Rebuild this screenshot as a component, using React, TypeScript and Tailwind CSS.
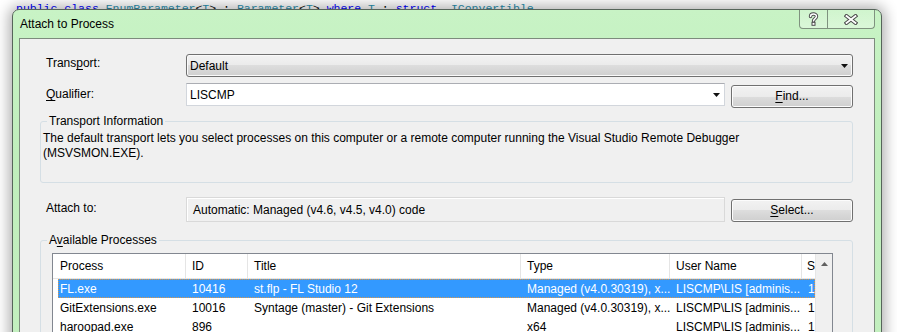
import React from "react";

// --- small glyphs ---
function DropArrow() {
  return (
    <svg width="7" height="4" viewBox="0 0 7 4" className="shrink-0">
      <path d="M0 0h7L3.5 4z" fill="#111" />
    </svg>
  );
}

function HelpGlyph() {
  return (
    <svg width="11" height="14" viewBox="0 0 11 14">
      <path d="M2.5 4.5C2.5 1.2 8.5 1.2 8.5 4.3C8.5 6.6 5.5 6.6 5.5 9" fill="none" stroke="#4b4b4b" strokeWidth="3.4" strokeLinecap="round" />
      <path d="M2.5 4.5C2.5 1.2 8.5 1.2 8.5 4.3C8.5 6.6 5.5 6.6 5.5 9" fill="none" stroke="#fff" strokeWidth="1.5" strokeLinecap="round" />
      <rect x="4" y="10.3" width="3" height="3" fill="#fff" stroke="#4b4b4b" strokeWidth="1" />
    </svg>
  );
}

function CloseGlyph() {
  return (
    <svg width="14" height="11" viewBox="0 0 14 11">
      <path d="M2.5 2L11.5 9M11.5 2L2.5 9" stroke="#4b4b4b" strokeWidth="3.8" strokeLinecap="square" />
      <path d="M2.5 2L11.5 9M11.5 2L2.5 9" stroke="#fff" strokeWidth="1.8" strokeLinecap="square" />
    </svg>
  );
}

// --- Win7 style button ---
function Button({ hot, rest }: { hot: string; rest: string }) {
  return (
    <button className="w-[122px] h-[23px] shrink-0 rounded-[3px] border border-[#707070] bg-[linear-gradient(to_bottom,#f2f2f2_0%,#ebebeb_50%,#dddddd_50%,#cfcfcf_100%)] shadow-[inset_0_0_0_1px_#fcfcfc] flex items-center justify-center leading-[15px]">
      <span className="underline underline-offset-2">{hot}</span>
      {rest}
    </button>
  );
}

const columns = [
  { name: "Process", w: "w-[133px] pl-[7px]" },
  { name: "ID", w: "w-[62px] pl-[6px]" },
  { name: "Title", w: "w-[273px] pl-[6px]" },
  { name: "Type", w: "w-[149px] pl-[6px]" },
  { name: "User Name", w: "w-[132px] pl-[6px]" },
];

const processes = [
  ["FL.exe", "10416", "st.flp - FL Studio 12", "Managed (v4.0.30319), x...", "LISCMP\\LIS [adminis...", "1"],
  ["GitExtensions.exe", "10016", "Syntage (master) - Git Extensions", "Managed (v4.0.30319), x...", "LISCMP\\LIS [adminis...", "1"],
  ["haroopad.exe", "896", "", "x64", "LISCMP\\LIS [adminis...", "1"],
];

function ProcessList() {
  return (
    <div className="h-[120px] border border-[#828790] bg-white flex">
      <div className="flex-1 min-w-0 overflow-hidden">
        {/* header */}
        <div className="h-[25px] flex border-b border-[#e5e5e5]">
          {columns.map((c) => (
            <div key={c.name} className={`${c.w} shrink-0 border-r border-[#e5e5e5] flex items-center whitespace-nowrap`}>
              {c.name}
            </div>
          ))}
          <div className="flex-1 min-w-0 pl-[5px] flex items-center overflow-hidden">S</div>
        </div>
        {/* rows */}
        {processes.map((p, i) => (
          <div
            key={p[0]}
            className={`ml-[5px] h-[19px] flex items-center whitespace-nowrap ${
              i === 0 ? "bg-[#3399ff] text-white outline-1 outline-dotted outline-[#d9964a] -outline-offset-1" : ""
            }`}
          >
            <div className="w-[128px] shrink-0 pl-[2px]">{p[0]}</div>
            <div className="w-[62px] shrink-0 pl-[6px]">{p[1]}</div>
            <div className="w-[273px] shrink-0 pl-[6px]">{p[2]}</div>
            <div className="w-[149px] shrink-0 pl-[6px]">{p[3]}</div>
            <div className="w-[132px] shrink-0 pl-[6px]">{p[4]}</div>
            <div className="flex-1 min-w-0 pl-[6px] overflow-hidden">{p[5]}</div>
          </div>
        ))}
      </div>
      {/* vertical scrollbar */}
      <div className="w-[17px] shrink-0 bg-[#f0f0f0] border-l border-[#e6e6e6] flex justify-center pt-[8px]">
        <svg width="7" height="4" viewBox="0 0 7 4">
          <path d="M0 4h7L3.5 0z" fill="#606060" />
        </svg>
      </div>
    </div>
  );
}

export default function App() {
  return (
    <div className="relative w-[897px] h-[332px] overflow-hidden bg-white font-['Liberation_Sans',sans-serif] text-[12px] text-black">
      {/* code editor behind the dialog */}
      <div className="pl-[16px] pt-[2px] whitespace-pre font-['Liberation_Mono',monospace] text-[11.5px] leading-[14px]">
        <span className="text-[#0000ff]">public class </span>
        <span className="text-[#2b91af]">EnumParameter</span>&lt;<span className="text-[#2b91af]">T</span>&gt; :{" "}
        <span className="text-[#2b91af]">Parameter</span>&lt;<span className="text-[#2b91af]">T</span>&gt;{" "}
        <span className="text-[#0000ff]">where</span> <span className="text-[#2b91af]">T</span> :{" "}
        <span className="text-[#0000ff]">struct</span>, <span className="text-[#2b91af]">IConvertible</span>
      </div>

      {/* dialog window */}
      <div className="absolute left-[12px] top-[9px] w-[870px] h-[360px] rounded-t-[7px] border border-[#56655a] bg-[linear-gradient(to_bottom,#c8f3c5,#c0eebc_40%,#c3efbf)] shadow-[0_0_14px_3px_rgba(0,0,0,0.32)] flex flex-col">
        {/* title bar */}
        <div className="h-[28px] shrink-0 flex items-start">
          <div className="pl-[7px] leading-[28px]">Attach to Process</div>
          <div className="ml-auto mr-[6px] flex h-[19px]">
            <div className="w-[29px] border border-t-0 border-[#7f927f] rounded-bl-[4px] bg-[linear-gradient(to_bottom,rgba(255,255,255,0.15),rgba(255,255,255,0.35))] flex items-center justify-center">
              <HelpGlyph />
            </div>
            <div className="w-[47px] border border-t-0 border-l-0 border-[#7f927f] rounded-br-[4px] bg-[linear-gradient(to_bottom,rgba(255,255,255,0.15),rgba(255,255,255,0.35))] flex items-center justify-center">
              <CloseGlyph />
            </div>
          </div>
        </div>

        {/* client area */}
        <div className="mx-[6px] flex-1 border border-[#7d8b7d] bg-[#f0f0f0] pl-[20px] pr-[21px] pt-[15px]">
          {/* Transport */}
          <div className="flex items-start h-[23px]">
            <div className="w-[146px] shrink-0 pl-[6px] pt-[2px] leading-[15px]">
              Trans<span className="underline underline-offset-2">p</span>ort:
            </div>
            <div className="flex-1 h-[23px] rounded-[3px] border border-[#707070] bg-[linear-gradient(to_bottom,#f2f2f2_0%,#ebebeb_50%,#dddddd_50%,#cfcfcf_100%)] shadow-[inset_0_0_0_1px_#fafafa] flex items-center pl-[3px] pr-[4px]">
              <span className="flex-1">Default</span>
              <DropArrow />
            </div>
          </div>

          {/* Qualifier */}
          <div className="mt-[6px] flex items-start">
            <div className="w-[146px] shrink-0 pl-[6px] pt-[4px] leading-[15px]">
              <span className="underline underline-offset-2">Q</span>ualifier:
            </div>
            <div className="w-[539px] shrink-0 h-[23px] border border-[#d2d6dc] border-t-[#abadb3] bg-white flex items-center pl-[3px] pr-[4px]">
              <span className="flex-1">LISCMP</span>
              <DropArrow />
            </div>
            <div className="ml-[6px] mt-[2px]">
              <Button hot="F" rest="ind..." />
            </div>
          </div>

          {/* Transport Information */}
          <div className="relative mt-[13px] h-[62px] rounded-[3px] border border-[#d5dfe5] pl-[2px] pt-[9px] leading-[15px]">
            <span className="absolute left-[6px] -top-[8px] px-[2px] bg-[#f0f0f0] leading-[15px]">Transport Information</span>
            <p>
              The default transport lets you select processes on this computer or a remote computer running the Visual Studio Remote Debugger
            </p>
            <p>(MSVSMON.EXE).</p>
          </div>

          {/* Attach to */}
          <div className="mt-[14px] flex items-start">
            <div className="w-[146px] shrink-0 pl-[6px] pt-[4px] leading-[15px]">Attach to:</div>
            <div className="w-[539px] shrink-0 h-[25px] border border-[#d9d9d9] bg-[#f0f0f0] shadow-[inset_1px_1px_0_#fff] flex items-center pl-[6px]">
              Automatic: Managed (v4.6, v4.5, v4.0) code
            </div>
            <div className="ml-[6px] mt-[2px]">
              <Button hot="S" rest="elect..." />
            </div>
          </div>

          {/* Available Processes */}
          <div className="relative mt-[18px] rounded-[3px] border border-[#d5dfe5] pl-[11px] pr-[19px] pt-[12px] pb-[10px]">
            <span className="absolute left-[6px] -top-[8px] px-[2px] bg-[#f0f0f0] leading-[15px]">
              A<span className="underline underline-offset-2">v</span>ailable Processes
            </span>
            <ProcessList />
          </div>
        </div>
      </div>
    </div>
  );
}
